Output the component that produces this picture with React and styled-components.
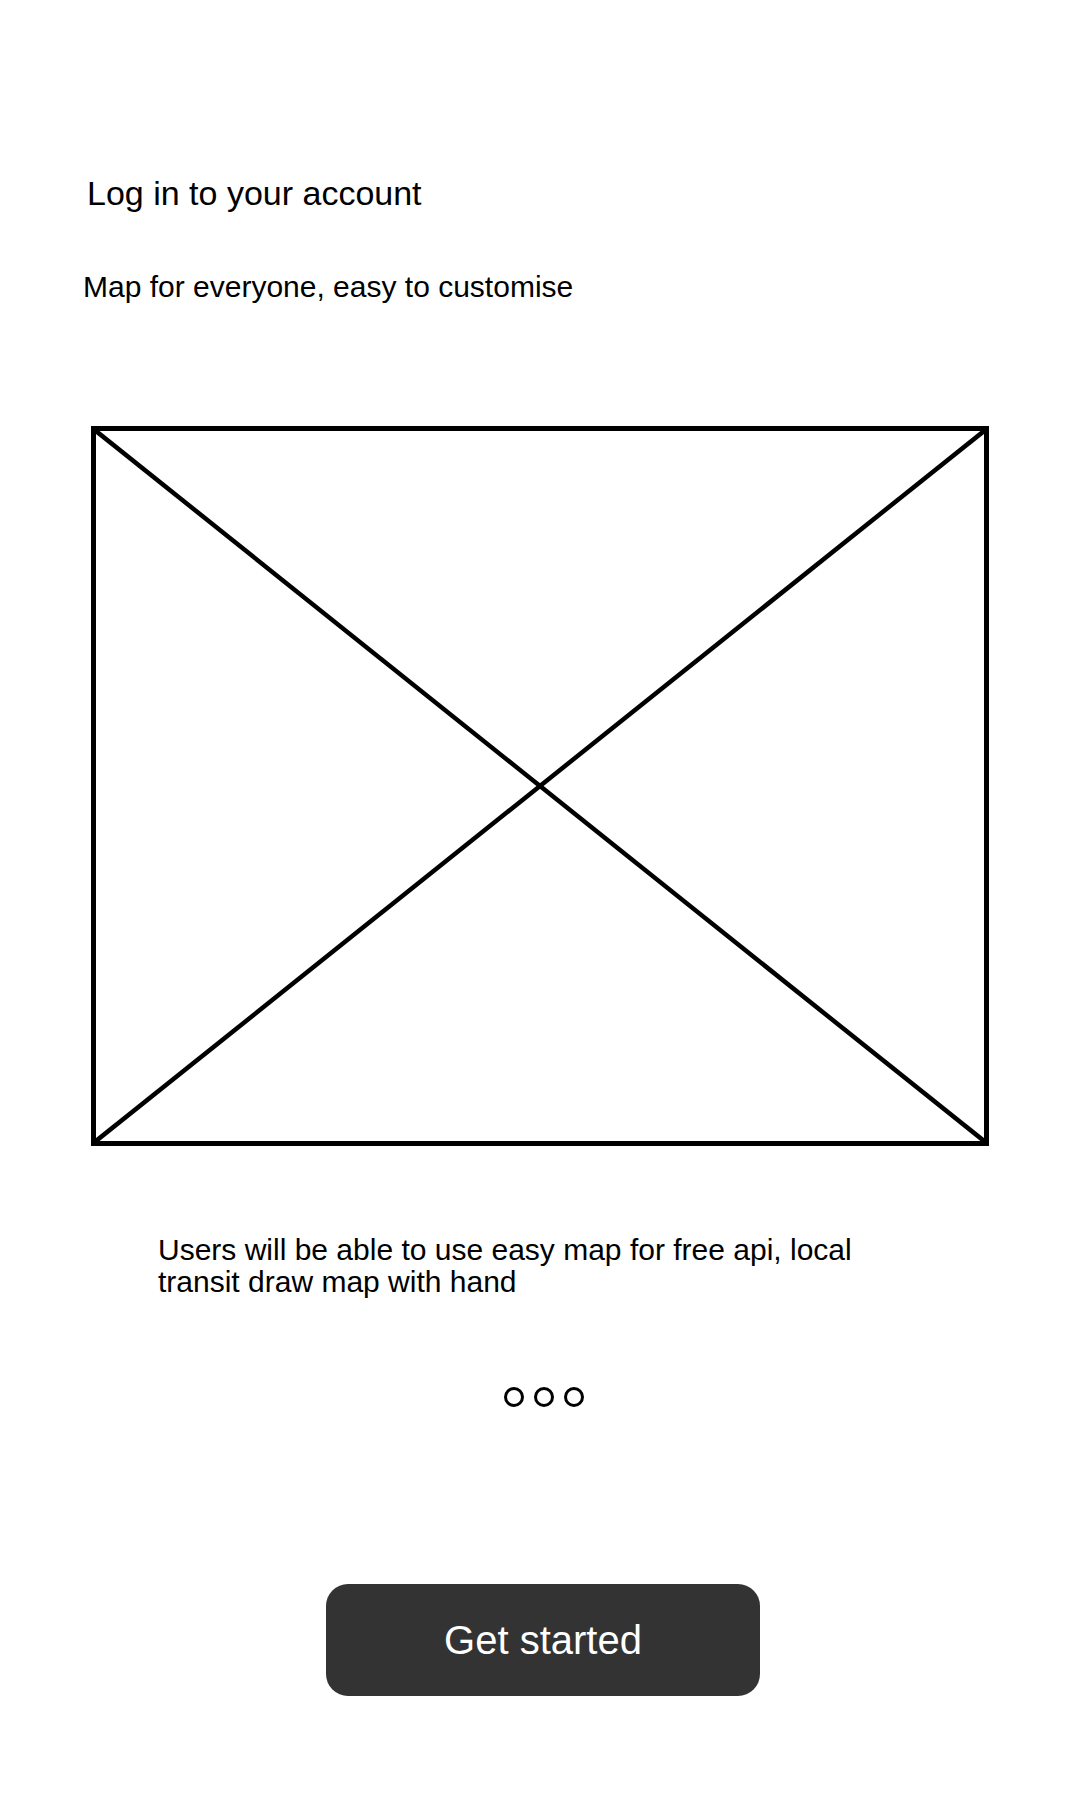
import React from "react"
import styled, { createGlobalStyle } from "styled-components"

const GlobalStyle = createGlobalStyle`
  body {
    margin: 0;
    background: #fff;
    font-family: "Liberation Sans", Arial, sans-serif;
    color: #000;
  }
`

const Page = styled.div`
  width: 1080px;
  height: 1800px;
  display: flex;
  flex-direction: column;
  padding-top: 173px;
  box-sizing: border-box;
`

const Title = styled.h1`
  margin: 0 0 0 87px;
  font-size: 34px;
  line-height: 40px;
  font-weight: 400;
`

const Subtitle = styled.p`
  margin: 57px 0 0 83px;
  font-size: 30px;
  line-height: 34px;
`

const Placeholder = styled.div`
  margin: 122px 0 0 91px;
  width: 898px;
  height: 720px;
  box-sizing: border-box;
  border: 5px solid #000;
  svg {
    display: block;
    width: 100%;
    height: 100%;
  }
`

const Blurb = styled.p`
  margin: 88px 0 0 158px;
  max-width: 720px;
  font-size: 30px;
  line-height: 32px;
`

const Dots = styled.div`
  margin-top: 89px;
  display: flex;
  justify-content: center;
  gap: 10px;
  padding-left: 8px;
`

const Dot = styled.span`
  width: 20px;
  height: 20px;
  box-sizing: border-box;
  border-radius: 50%;
  border: 3px solid #000;
  background: ${p => (p.active ? "#000" : "transparent")};
`

const Footer = styled.div`
  margin-top: 177px;
  display: flex;
  justify-content: center;
  padding-left: 6px;
`

const Button = styled.button`
  width: 434px;
  height: 112px;
  border: none;
  border-radius: 22px;
  background: #333333;
  color: #fff;
  font-family: inherit;
  font-size: 40px;
  cursor: pointer;
`

const App = () => {
  return (
    <Page>
      <GlobalStyle />
      <Title>Log in to your account</Title>
      <Subtitle>Map for everyone, easy to customise</Subtitle>
      <Placeholder>
        <svg viewBox="0 0 888 710" preserveAspectRatio="none">
          <line x1="0" y1="0" x2="888" y2="710" stroke="#000" strokeWidth="4.5" />
          <line x1="888" y1="0" x2="0" y2="710" stroke="#000" strokeWidth="4.5" />
        </svg>
      </Placeholder>
      <Blurb>
        Users will be able to use easy map for free api, local transit draw map with hand
      </Blurb>
      <Dots>
        <Dot />
        <Dot />
        <Dot />
      </Dots>
      <Footer>
        <Button>Get started</Button>
      </Footer>
    </Page>
  )
}

export default App
